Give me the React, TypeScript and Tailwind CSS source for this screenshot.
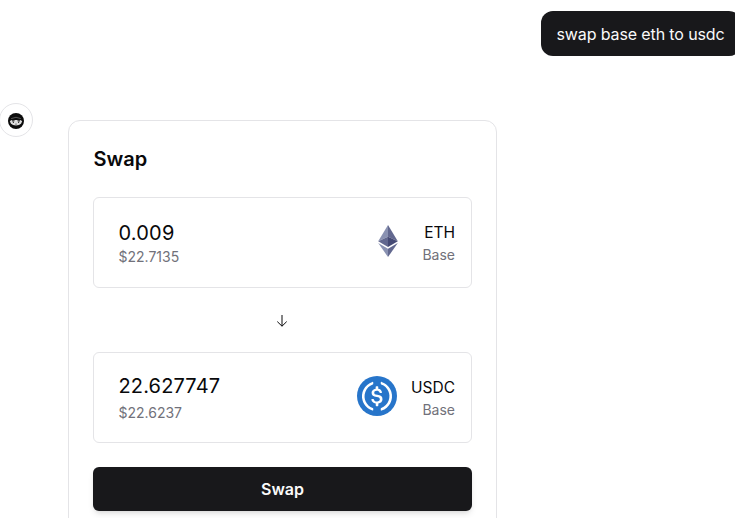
import type { ReactNode } from "react";

type TokenPanelProps = {
  amount: ReactNode;
  value: ReactNode;
  symbol: ReactNode;
  icon: ReactNode;
};

function TokenPanel({ amount, value, symbol, icon }: TokenPanelProps) {
  return (
    <div className="flex h-[91px] items-center justify-between rounded-md border border-[#e4e4e7] pl-[24.5px] pr-[16px]">
      <div className="flex flex-col pt-[2px]">{amount}{value}</div>
      <div className="flex items-center gap-[14px]">
        <div className="pb-[4px]">{icon}</div>
        <div className="whitespace-nowrap pt-[2px] text-right">
          {symbol}
          <p className="text-[14px] leading-[21px] text-[#71717a]">Base</p>
        </div>
      </div>
    </div>
  );
}

function EthIcon() {
  return (
    <svg viewBox="0 0 40 40" className="size-10">
      <path d="M20 4 10.2 20.3 20 15.8Z" fill="#8a92b2" />
      <path d="M20 4v11.8l9.8 4.5Z" fill="#62688f" />
      <path d="M10.2 20.3 20 26V15.8Z" fill="#62688f" />
      <path d="M20 15.8V26l9.8-5.7Z" fill="#454a75" />
      <path d="M10.2 22.1 20 36v-8.2Z" fill="#8a92b2" />
      <path d="M20 27.8V36l9.8-13.9Z" fill="#62688f" />
    </svg>
  );
}

function UsdcIcon() {
  return (
    <svg viewBox="0 0 2000 2000" className="size-10">
      <circle cx="1000" cy="1000" r="1000" fill="#2775ca" />
      <path
        d="M1275 1158.33c0-145.83-87.5-195.83-262.5-216.66-125-16.67-150-50-150-108.34s41.67-95.83 125-95.83c75 0 116.67 25 137.5 87.5 4.17 12.5 16.67 20.83 29.17 20.83h66.66c16.67 0 29.17-12.5 29.17-29.16v-4.17c-16.67-91.67-91.67-162.5-187.5-170.83v-100c0-16.67-12.5-29.17-33.33-33.34h-62.5c-16.67 0-29.17 12.5-33.34 33.34v95.83c-125 16.67-204.16 100-204.16 204.17 0 137.5 83.33 191.66 258.33 212.5 116.67 20.83 154.17 45.83 154.17 112.5s-58.34 112.5-137.5 112.5c-108.34 0-145.84-45.84-158.34-108.34-4.16-16.66-16.66-25-29.16-25h-70.84c-16.66 0-29.16 12.5-29.16 29.17v4.17c16.66 104.16 83.33 179.16 220.83 200v100c0 16.66 12.5 29.16 33.33 33.33h62.5c16.67 0 29.17-12.5 33.34-33.33v-100c125-20.84 208.33-108.34 208.33-220.84z"
        fill="white"
      />
      <path
        d="M787.5 1595.83c-325-116.66-491.67-479.16-370.83-800 62.5-175 200-308.33 370.83-370.83 16.67-8.33 25-20.83 25-41.67V325c0-16.67-8.33-29.17-25-33.33-4.17 0-12.5 0-16.67 4.16-395.83 125-612.5 545.84-487.5 941.67 75 233.33 254.17 412.5 487.5 487.5 16.67 8.33 33.34 0 37.5-16.67 4.17-4.16 4.17-8.33 4.17-16.66v-58.34c0-12.5-12.5-29.16-25-37.5zM1229.17 295.83c-16.67-8.33-33.34 0-37.5 16.67-4.17 4.17-4.17 8.33-4.17 16.67v58.33c0 16.67 12.5 33.33 25 41.67 325 116.66 491.67 479.16 370.83 800-62.5 175-200 308.33-370.83 370.83-16.67 8.33-25 20.83-25 41.67V1700c0 16.67 8.33 29.17 25 33.33 4.17 0 12.5 0 16.67-4.16 395.83-125 612.5-545.84 487.5-941.67-75-237.5-258.34-416.67-487.5-491.67z"
        fill="white"
      />
    </svg>
  );
}

function AssistantIcon() {
  return (
    <svg viewBox="0 0 16 16" className="size-4">
      <circle cx="8" cy="8" r="8" fill="#0c0c0c" />
      <path d="M3.2 5.6Q8 3 12.8 5.6" fill="none" stroke="#8a8a8a" strokeWidth=".6" />
      <path d="M1.8 8.2 3.4 6.9h9.2l1.6 1.3-1.2 2.6Q11.4 12.6 8 12.6T3 10.8Z" fill="#dedede" />
      <path d="M3.6 7.2h3.1L6.2 8.4H4.3ZM9.3 7.2h3.1l-.7 1.2H9.8Z" fill="#222" />
      <circle cx="5.4" cy="9.4" r=".6" fill="#333" />
      <circle cx="10.6" cy="9.4" r=".6" fill="#333" />
      <path d="M7.1 11Q8 11.5 8.9 11" fill="none" stroke="#333" strokeWidth=".6" />
    </svg>
  );
}

export default function App() {
  return (
    <main className="h-[518px] w-[735px] overflow-hidden bg-white font-['Inter','Liberation_Sans',sans-serif] text-[#09090b]">
      <div className="flex pl-[541px] pt-[11px]">
        <div className="h-[45px] w-[200px] shrink-0 whitespace-nowrap rounded-xl bg-[#18181b] pl-[15.5px] text-[16px] leading-[46px] tracking-[-0.12px] text-[#fafafa]">
          swap base eth to usdc
        </div>
      </div>

      <div className="mt-[47px] flex items-start">
        <div className="-ml-px flex size-[34px] shrink-0 items-center justify-center rounded-full border border-[#e4e4e7] pt-px">
          <AssistantIcon />
        </div>

        <section className="ml-[35px] mt-[17px] h-[430px] w-[429px] shrink-0 rounded-xl border border-[#e4e4e7] px-[24px] pt-[24px]">
          <h2 className="pl-[0.5px] text-[20px] font-semibold leading-[28px]">Swap</h2>

          <div className="mt-[24px]">
            <TokenPanel
              amount={<p className="text-[20px] leading-[26px] tracking-[0.2px]">0.009</p>}
              value={<p className="text-[14px] leading-[22px] text-[#71717a]">$22.7135</p>}
              symbol={<p className="text-[15.5px] leading-[22px]">ETH</p>}
              icon={<EthIcon />}
            />
            <div className="flex h-[64px] items-center justify-center pr-px pt-px">
              <svg viewBox="0 0 14 14" className="size-[14px] text-[#09090b]" fill="none" stroke="currentColor">
                <path d="M7 1v11.2M2.3 7.6 7 12.2l4.7-4.6" />
              </svg>
            </div>
            <TokenPanel
              amount={<p className="text-[20px] leading-[28px] tracking-[0.15px]">22.627747</p>}
              value={<p className="text-[14px] leading-[26px] text-[#71717a]">$22.6237</p>}
              symbol={<p className="text-[15.5px] leading-[22px]">USDC</p>}
              icon={<UsdcIcon />}
            />
          </div>

          <button className="mt-[24px] block h-[44px] w-full rounded-md bg-[#18181b] text-[16px] font-semibold text-[#fafafa] shadow-md">
            Swap
          </button>
        </section>
      </div>
    </main>
  );
}
